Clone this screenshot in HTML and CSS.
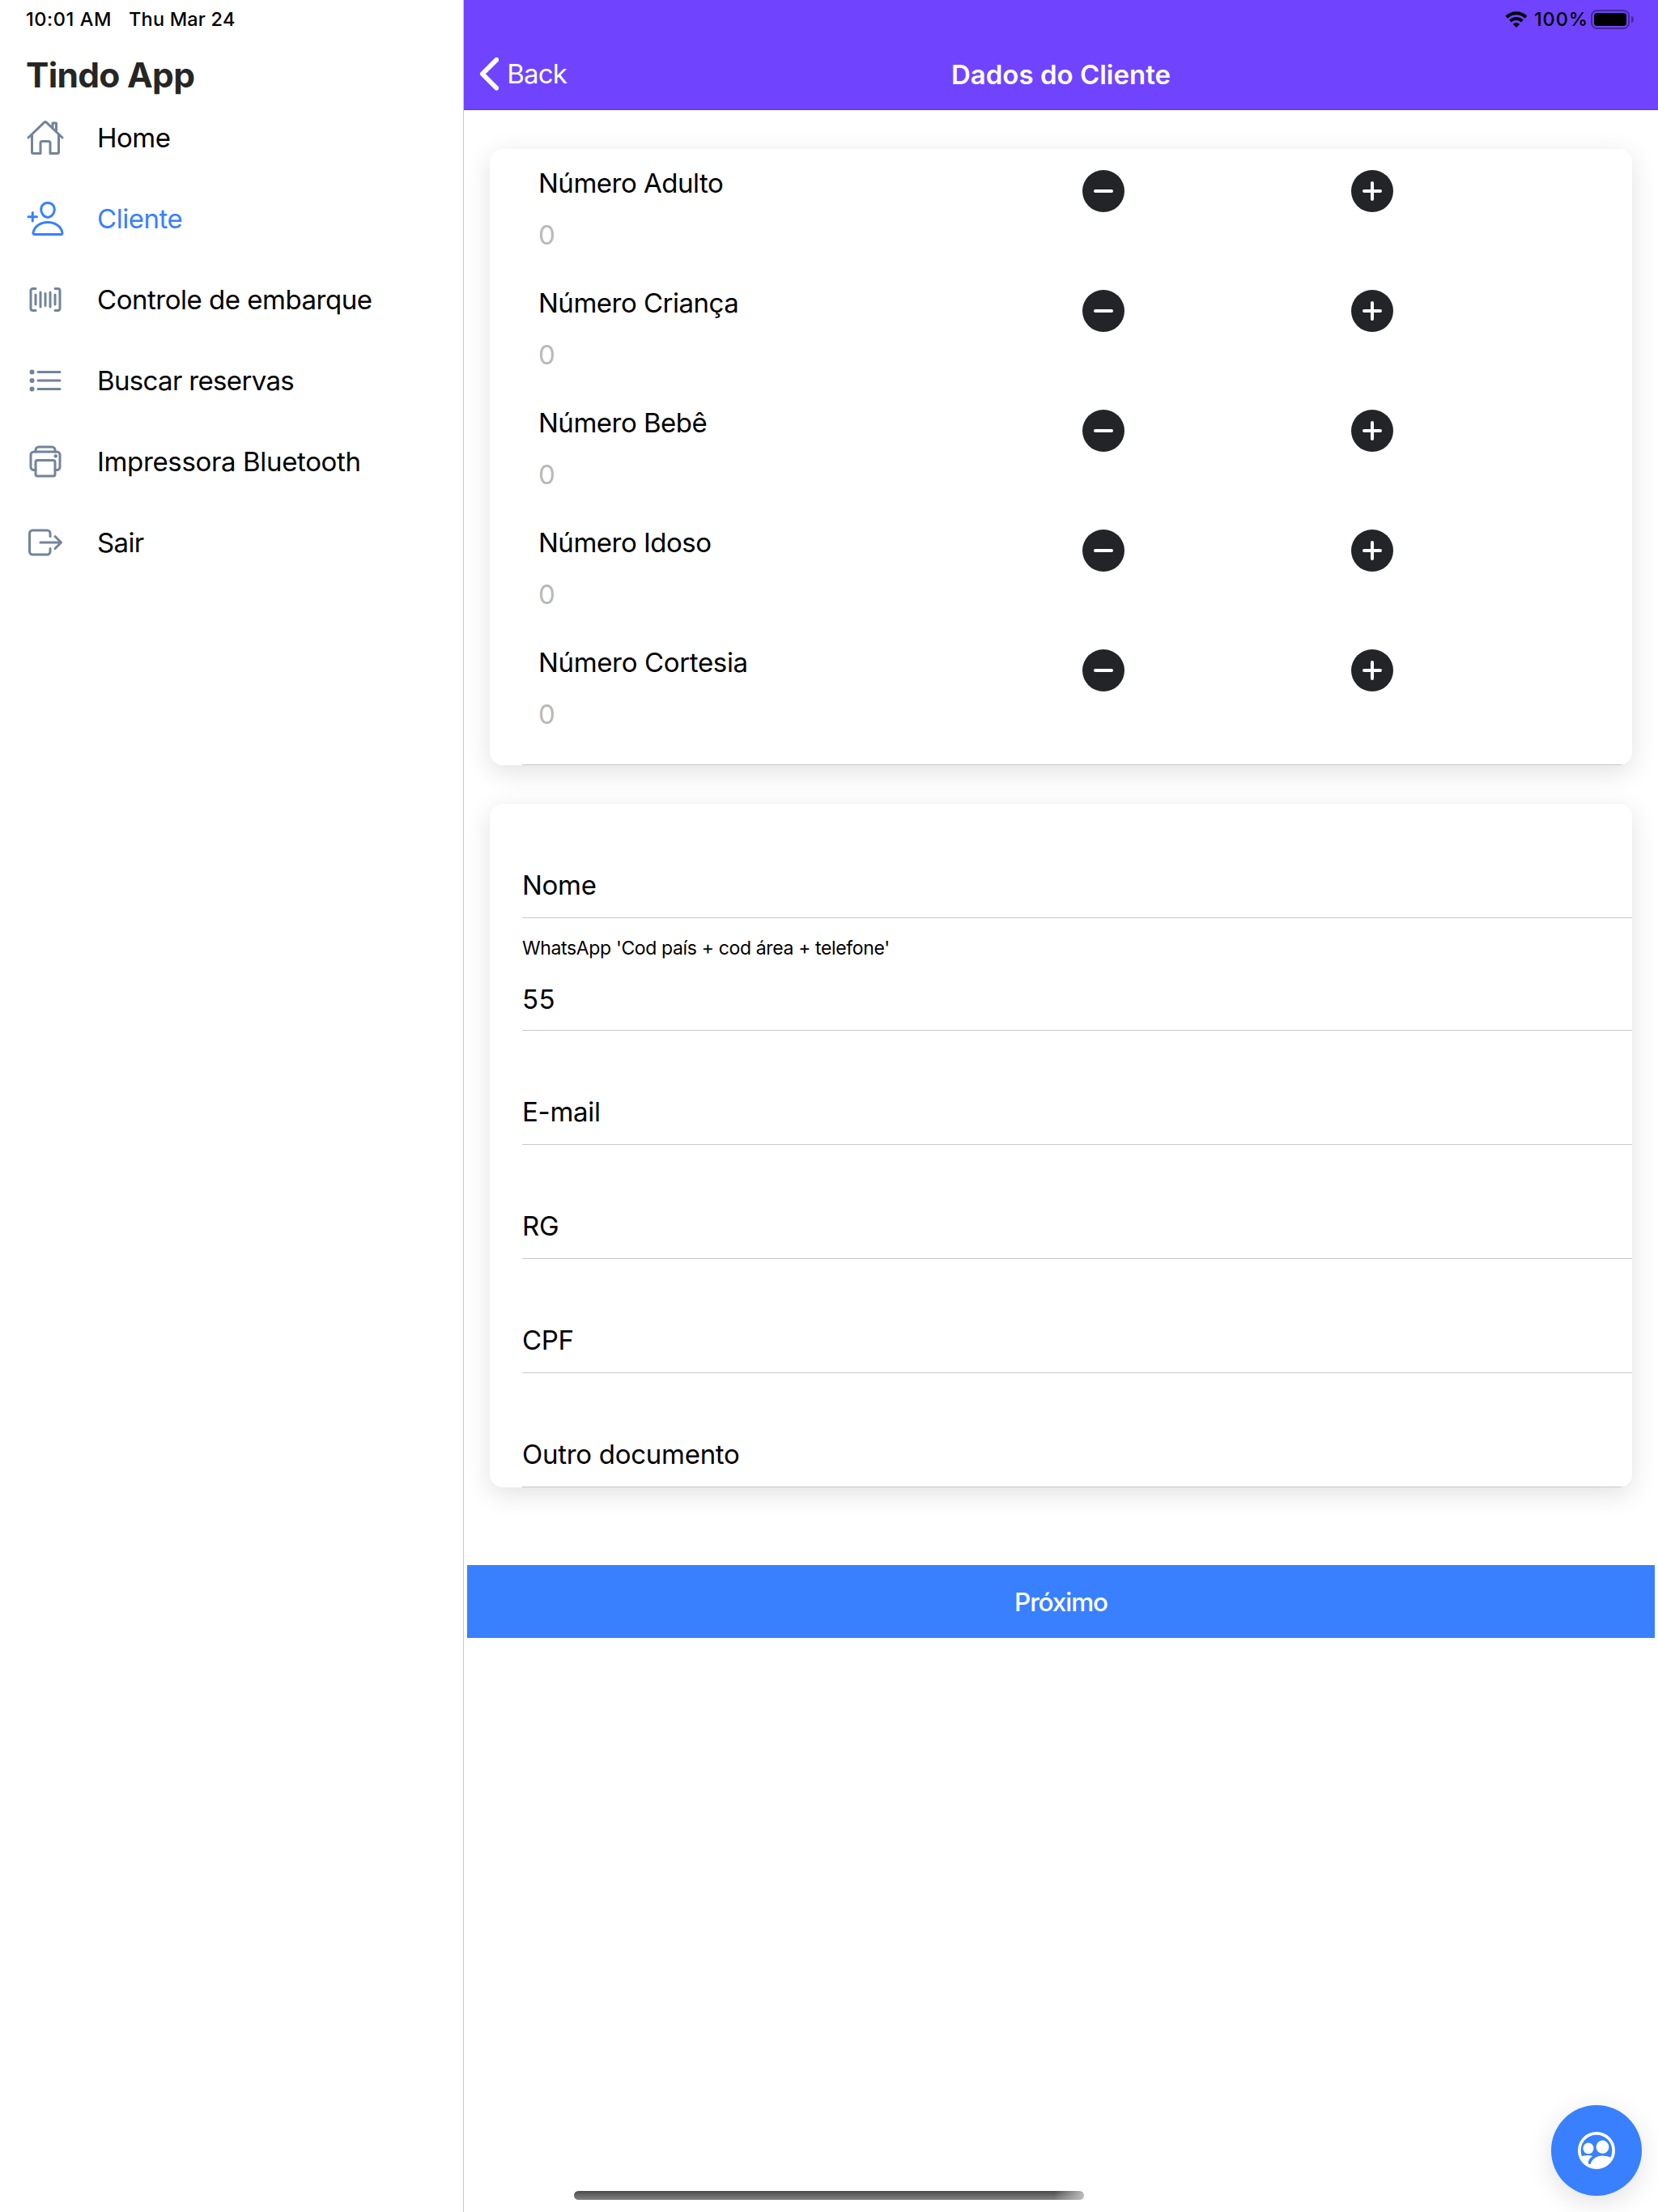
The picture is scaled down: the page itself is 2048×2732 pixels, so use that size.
FILE: index.html
```html
<!DOCTYPE html>
<html lang="pt-BR">
<head>
<meta charset="utf-8">
<title>Tindo App</title>
<link rel="stylesheet" href="styles.css">
</head>
<body>
<div class="app">
  <aside class="sidebar">
    <div class="status status-left"><span class="time">10:01 AM</span><span class="date">Thu Mar 24</span></div>
    <h1 class="brand">Tindo App</h1>
    <nav class="menu">
      <a class="menu-item">
        <svg class="icon" viewBox="0 0 512 512"><path d="M80 212v236a16 16 0 0016 16h96V328a24 24 0 0124-24h80a24 24 0 0124 24v136h96a16 16 0 0016-16V212"/><path d="M480 256L266.89 52c-5-5.28-16.69-5.34-21.78 0L32 256M400 179V64h-48v69"/></svg>
        <span>Home</span>
      </a>
      <a class="menu-item active">
        <svg class="icon" viewBox="0 0 512 512"><path d="M376 144c-3.92 52.87-44 96-88 96s-84.15-43.12-88-96c-4-55 35-96 88-96s92 42 88 96z"/><path d="M288 304c-87 0-175.3 48-191.64 138.6-2 10.92 4.21 21.4 15.64 21.4h352c11.44 0 17.62-10.48 15.65-21.4C463.3 352 375 304 288 304zM88 176v112M144 232H32"/></svg>
        <span>Cliente</span>
      </a>
      <a class="menu-item">
        <svg class="icon" viewBox="0 0 512 512"><path d="M384 400.33l35.13-.33A29 29 0 00448 371.13V140.87A29 29 0 00419.13 112l-35.13.33M128 112l-36.8.33c-15.88 0-27.2 13-27.2 28.87v230.27c0 15.87 11.32 28.87 27.2 28.87L128 400M384 192v128M320 160v192M256 176v160M192 160v192M128 192v128"/></svg>
        <span>Controle de embarque</span>
      </a>
      <a class="menu-item">
        <svg class="icon" viewBox="0 0 512 512"><path d="M160 144h288M160 256h288M160 368h288"/><circle cx="80" cy="144" r="16"/><circle cx="80" cy="256" r="16"/><circle cx="80" cy="368" r="16"/></svg>
        <span class="snug">Buscar reservas</span>
      </a>
      <a class="menu-item">
        <svg class="icon" viewBox="0 0 512 512"><path d="M384 368h24a40.12 40.12 0 0040-40V168a40.12 40.12 0 00-40-40H104a40.12 40.12 0 00-40 40v160a40.12 40.12 0 0040 40h24"/><rect x="128" y="240" width="256" height="208" rx="24"/><path d="M384 128v-24a40.12 40.12 0 00-40-40H168a40.12 40.12 0 00-40 40v24"/><circle class="dot" cx="392" cy="184" r="24"/></svg>
        <span class="loose">Impressora Bluetooth</span>
      </a>
      <a class="menu-item">
        <svg class="icon" viewBox="0 0 512 512"><path d="M320 176v-40a40 40 0 00-40-40H88a40 40 0 00-40 40v240a40 40 0 0040 40h192a40 40 0 0040-40v-40M384 176l80 80-80 80M191 256h273"/></svg>
        <span class="snug">Sair</span>
      </a>
    </nav>
  </aside>

  <main class="page">
    <header class="header">
      <div class="status status-right">
        <svg class="wifi" viewBox="0 0 28 20"><path d="M2 7.2C8.800.6 19.200.6 26 7.2M6.600 12c4.300-4 10.500-4 14.800 0"/><path class="tip" d="M14 20l-4.200-4.300c2.400-2.100 6-2.100 8.400 0z"/></svg>
        <span class="percent">100%</span>
        <svg class="battery" viewBox="0 0 54 24"><rect class="shell" x="1" y="1" width="46" height="22" rx="6.5"/><rect x="4" y="4" width="40" height="16" rx="3.5"/><path class="cap" d="M50 7.5c4 1.5 4 7.5 0 9z"/></svg>
      </div>
      <div class="toolbar">
        <a class="back"><svg class="chevron" viewBox="144 72 208 368"><path d="M328 112L184 256l144 144"/></svg><span>Back</span></a>
        <h2 class="title">Dados do Cliente</h2>
      </div>
    </header>

    <section class="card counters">
      <div class="counter">
        <div><div class="counter-label">Número Adulto</div><div class="counter-value">0</div></div>
        <svg class="round" viewBox="0 0 52 52"><circle cx="26" cy="26" r="26"/><path d="M16 26h20"/></svg>
        <svg class="round" viewBox="0 0 52 52"><circle cx="26" cy="26" r="26"/><path d="M16 26h20M26 16v20"/></svg>
      </div>
      <div class="counter">
        <div><div class="counter-label">Número Criança</div><div class="counter-value">0</div></div>
        <svg class="round" viewBox="0 0 52 52"><circle cx="26" cy="26" r="26"/><path d="M16 26h20"/></svg>
        <svg class="round" viewBox="0 0 52 52"><circle cx="26" cy="26" r="26"/><path d="M16 26h20M26 16v20"/></svg>
      </div>
      <div class="counter">
        <div><div class="counter-label">Número Bebê</div><div class="counter-value">0</div></div>
        <svg class="round" viewBox="0 0 52 52"><circle cx="26" cy="26" r="26"/><path d="M16 26h20"/></svg>
        <svg class="round" viewBox="0 0 52 52"><circle cx="26" cy="26" r="26"/><path d="M16 26h20M26 16v20"/></svg>
      </div>
      <div class="counter">
        <div><div class="counter-label">Número Idoso</div><div class="counter-value">0</div></div>
        <svg class="round" viewBox="0 0 52 52"><circle cx="26" cy="26" r="26"/><path d="M16 26h20"/></svg>
        <svg class="round" viewBox="0 0 52 52"><circle cx="26" cy="26" r="26"/><path d="M16 26h20M26 16v20"/></svg>
      </div>
      <div class="counter">
        <div><div class="counter-label loose">Número Cortesia</div><div class="counter-value">0</div></div>
        <svg class="round" viewBox="0 0 52 52"><circle cx="26" cy="26" r="26"/><path d="M16 26h20"/></svg>
        <svg class="round" viewBox="0 0 52 52"><circle cx="26" cy="26" r="26"/><path d="M16 26h20M26 16v20"/></svg>
      </div>
      <div class="rule"></div>
    </section>

    <section class="card fields">
      <div class="field">Nome</div>
      <div class="field stacked"><label class="hint">WhatsApp 'Cod país + cod área + telefone'</label><div class="value">55</div></div>
      <div class="field">E-mail</div>
      <div class="field">RG</div>
      <div class="field">CPF</div>
      <div class="field">Outro documento</div>
    </section>

    <button class="next">Próximo</button>
  </main>

  <div class="fab">
    <svg class="people" viewBox="303 219 138 138"><circle class="ring" cx="372" cy="288" r="63.5"/><ellipse cx="342" cy="280" rx="19.5" ry="20.5"/><ellipse cx="394.5" cy="275" rx="23.5" ry="24.5"/><path d="M311 313c14-8 33-9 47-4-12 8-18 18-16 29l8 1c3-17 19-30 38-31 16-1 30 3 42 9-9 23-31 38-58 38-28 0-52-17-61-42z"/></svg>
  </div>
  <div class="home-bar"></div>
</div>
</body>
</html>
```
FILE: styles.css
```css
* { box-sizing: border-box; }

body {
  margin: 0;
  background: #fff;
  color: #000;
  font-family: Inter, "Liberation Sans", sans-serif;
  font-size: 33px;
}

.app {
  position: relative;
  display: grid;
  grid-template-columns: 573px 1fr;
  width: 2048px;
  height: 2732px;
  overflow: hidden;
}

/* Sidebar */
.sidebar { border-right: 1px solid #c8c7cc; }

.status {
  display: flex;
  align-items: center;
  height: 47px;
  font-size: 23.5px;
  font-weight: 500;
}
.status-left { padding-left: 32px; }
.time { width: 127px; letter-spacing: 0.6px; }
.date { letter-spacing: 0.2px; }

.brand {
  margin: 0;
  padding: 18px 0 0 32px;
  color: #262626;
  font-size: 42.5px;
  font-weight: 700;
  line-height: 55px;
  letter-spacing: -0.7px;
}

.menu-item {
  display: flex;
  align-items: center;
  gap: 40px;
  height: 100px;
  padding-left: 32px;
  letter-spacing: -0.48px;
}
.active { color: #3880ff; }
.snug { letter-spacing: -0.66px; }
.loose { letter-spacing: -0.35px; }

.icon {
  width: 48px;
  height: 48px;
  fill: none;
  stroke: #73849a;
  stroke-width: 32;
  stroke-linecap: round;
  stroke-linejoin: round;
}
.active .icon { stroke: #3880ff; }
.icon .dot { fill: #73849a; stroke: none; }

/* Header */
.header {
  height: 136px;
  background: #7044ff;
  border-bottom: 1px solid #5a36cc;
}
.status-right { justify-content: flex-end; padding-right: 29px; }
.wifi { width: 28px; height: 20px; fill: none; stroke: #000; stroke-width: 4; }
.wifi .tip { fill: #000; stroke: none; }
.percent { margin: 0 3px 0 8px; letter-spacing: 0.9px; }
.battery { width: 54px; height: 24px; }
.battery .shell { fill: none; stroke: #000; stroke-width: 2; opacity: 0.4; }
.battery .cap { opacity: 0.4; }

.toolbar {
  display: grid;
  grid-template-columns: 1fr auto 1fr;
  align-items: center;
  height: 88px;
  color: #fff;
}
.back {
  display: flex;
  align-items: center;
  gap: 10px;
  padding-left: 18px;
  letter-spacing: -0.8px;
}
.chevron {
  width: 25.2px;
  height: 44.6px;
  fill: none;
  stroke: #fff;
  stroke-width: 48;
  stroke-linecap: round;
  stroke-linejoin: round;
}
.title { margin: 2px 0 0; font-size: 33px; font-weight: 600; }

/* Cards */
.card {
  margin: 48px 32px 0;
  border-radius: 16px;
  background: #fff;
  box-shadow: 0 8px 32px rgba(0, 0, 0, 0.12);
  overflow: hidden;
}
.counters { height: 761px; padding: 10px 0 0 40px; }
.counter {
  display: grid;
  grid-template-columns: 672px 332px auto;
  height: 148px;
  padding-left: 20px;
  letter-spacing: -0.5px;
}
.counter-label, .counter-value { line-height: 64px; }
.counter-value { color: #b9b9b9; }
.round { width: 52px; height: 52px; margin-top: 16px; }
.round circle { fill: #222428; }
.round path { stroke: #fff; stroke-width: 4; stroke-linecap: round; }
.rule { height: 1px; margin-top: 10px; background: #c8c7cc; }

.fields { padding-left: 40px; }
.field {
  height: 141px;
  padding-top: 60px;
  border-bottom: 1px solid #c8c7cc;
  line-height: 80px;
  letter-spacing: -0.28px;
}
.stacked { height: 139px; padding-top: 12px; }
.hint { display: block; font-size: 23px; line-height: 50px; letter-spacing: -0.36px; }
.value { line-height: 76px; letter-spacing: 0.5px; }

.next {
  display: block;
  width: 1467px;
  height: 90px;
  margin: 96px 4px 0;
  padding: 1px 0 0;
  border: 0;
  background: #3880ff;
  color: #fff;
  font: 500 31.5px/89px Inter, sans-serif;
  letter-spacing: -1.1px;
}

/* Floating elements */
.fab {
  position: absolute;
  right: 20px;
  bottom: 20px;
  display: flex;
  align-items: center;
  justify-content: center;
  width: 112px;
  height: 112px;
  border-radius: 50%;
  background: #3880ff;
  box-shadow: 0 8px 32px rgba(0, 0, 0, 0.12);
}
.people { width: 46px; height: 46px; fill: #fff; }
.people .ring { fill: none; stroke: #fff; stroke-width: 11; }

.home-bar {
  position: absolute;
  left: 709px;
  bottom: 15px;
  width: 630px;
  height: 11px;
  border-radius: 6px;
  background:
    linear-gradient(100deg, rgba(190, 190, 190, 0) 94%, #bebebe 100%),
    linear-gradient(#4b4b4b, #828282);
}
```
